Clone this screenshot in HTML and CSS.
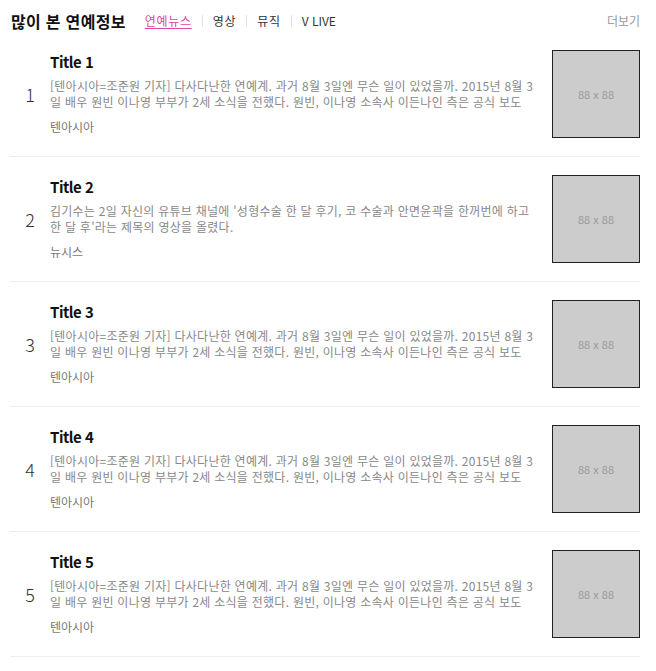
FILE: index.html
```html
<!DOCTYPE html>
<html lang="ko">
<head>
<meta charset="utf-8">
<title>많이 본 연예정보</title>
<link rel="stylesheet" href="styles.css">
</head>
<body>
<div class="panel">
  <div class="head">
    <h2 class="head-title">많이 본 연예정보</h2>
    <ul class="tabs">
      <li class="tab tab-on">연예뉴스</li>
      <li class="tab">영상</li>
      <li class="tab">뮤직</li>
      <li class="tab tab-latin">V LIVE</li>
    </ul>
    <a class="more">더보기</a>
  </div>
  <ol class="list">
    <li class="row">
      <span class="num">1</span>
      <div class="body">
        <strong class="title">Title 1</strong>
        <p class="desc">[텐아시아=조준원 기자] 다사다난한 연예계. 과거 8월 3일엔 무슨 일이 있었을까. 2015년 8월 3일 배우 원빈 이나영 부부가 2세 소식을 전했다. 원빈, 이나영 소속사 이든나인 측은 공식 보도</p>
        <span class="src">텐아시아</span>
      </div>
      <div class="thumb">88 x 88</div>
    </li>
    <li class="row">
      <span class="num">2</span>
      <div class="body">
        <strong class="title">Title 2</strong>
        <p class="desc">김기수는 2일 자신의 유튜브 채널에 '성형수술 한 달 후기, 코 수술과 안면윤곽을 한꺼번에 하고 한 달 후'라는 제목의 영상을 올렸다.</p>
        <span class="src">뉴시스</span>
      </div>
      <div class="thumb">88 x 88</div>
    </li>
    <li class="row">
      <span class="num">3</span>
      <div class="body">
        <strong class="title">Title 3</strong>
        <p class="desc">[텐아시아=조준원 기자] 다사다난한 연예계. 과거 8월 3일엔 무슨 일이 있었을까. 2015년 8월 3일 배우 원빈 이나영 부부가 2세 소식을 전했다. 원빈, 이나영 소속사 이든나인 측은 공식 보도</p>
        <span class="src">텐아시아</span>
      </div>
      <div class="thumb">88 x 88</div>
    </li>
    <li class="row">
      <span class="num">4</span>
      <div class="body">
        <strong class="title">Title 4</strong>
        <p class="desc">[텐아시아=조준원 기자] 다사다난한 연예계. 과거 8월 3일엔 무슨 일이 있었을까. 2015년 8월 3일 배우 원빈 이나영 부부가 2세 소식을 전했다. 원빈, 이나영 소속사 이든나인 측은 공식 보도</p>
        <span class="src">텐아시아</span>
      </div>
      <div class="thumb">88 x 88</div>
    </li>
    <li class="row">
      <span class="num">5</span>
      <div class="body">
        <strong class="title">Title 5</strong>
        <p class="desc">[텐아시아=조준원 기자] 다사다난한 연예계. 과거 8월 3일엔 무슨 일이 있었을까. 2015년 8월 3일 배우 원빈 이나영 부부가 2세 소식을 전했다. 원빈, 이나영 소속사 이든나인 측은 공식 보도</p>
        <span class="src">텐아시아</span>
      </div>
      <div class="thumb">88 x 88</div>
    </li>
  </ol>
</div>
</body>
</html>
```
FILE: styles.css
```css
* { box-sizing: border-box; }
html, body { margin: 0; padding: 0; background: #fff; }
body {
  font-family: "Noto Sans CJK KR", "Noto Sans", sans-serif;
  color: #333;
}
.panel {
  width: 640px;
  padding-left: 10px;
}
.head {
  height: 32px;
  padding-top: 10px;
  display: flex;
  align-items: center;
}
.head-title {
  margin: 0 0 0 1px;
  font-size: 16px;
  font-weight: 700;
  color: #111;
  line-height: 22px;
  letter-spacing: 0.3px;
}
.tabs {
  list-style: none;
  margin: 0 0 0 19px;
  padding: 0;
  display: flex;
  align-items: center;
}
.tab {
  font-size: 12px;
  color: #333;
  padding: 0 10px;
  border-left: 1px solid #e2e2e2;
  line-height: 12px;
  letter-spacing: 0.7px;
}
.tab:first-child {
  padding-left: 0;
  border-left: 0;
}
.tab-latin {
  letter-spacing: 0;
}
.tab-on {
  color: #e0479e;
  text-decoration: underline;
  text-underline-offset: 2px;
}
.more {
  margin-left: auto;
  font-size: 12px;
  color: #999;
  line-height: 16px;
}
.list {
  list-style: none;
  margin: 0;
  padding: 0;
}
.row {
  display: flex;
  align-items: center;
  padding: 18px 0;
  border-bottom: 1px solid #eee;
}
.num {
  width: 40px;
  text-align: center;
  font-size: 18px;
  font-weight: 300;
  color: #333;
  line-height: 20px;
}
.body {
  flex: 1;
  min-width: 0;
  height: 88px;
  padding-right: 12px;
  display: flex;
  flex-direction: column;
}
.title {
  font-size: 15px;
  font-weight: 700;
  color: #111;
  line-height: 24px;
  letter-spacing: -0.5px;
}
.desc {
  margin: 4px 0 0;
  font-size: 12px;
  line-height: 16px;
  color: #888;
  word-break: break-all;
  letter-spacing: 0.26px;
}
.src {
  margin-top: 9px;
  font-size: 12px;
  line-height: 16px;
  color: #777;
}
.thumb {
  flex: none;
  width: 88px;
  height: 88px;
  background: #ccc;
  border: 1px solid #222;
  color: #999;
  font-size: 11px;
  display: flex;
  align-items: center;
  justify-content: center;
}
```
